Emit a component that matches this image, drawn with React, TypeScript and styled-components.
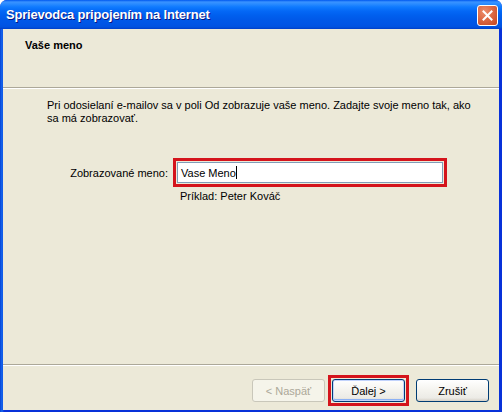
import React from "react";
import styled, { createGlobalStyle } from "styled-components";

const Global = createGlobalStyle`
  html, body { margin: 0; padding: 0; background: #ffffff; }
  body { font-family: Tahoma, "Liberation Sans", Arial, sans-serif; font-size: 11px; color: #000; }
  #root { width: 502px; height: 412px; }
`;

const Window = styled.div`
  width: 502px;
  height: 412px;
  display: flex;
  flex-direction: column;
  background: #0831d9;
  border-radius: 7px 7px 0 0;
  overflow: hidden;
`;

const TitleBar = styled.div`
  height: 29px;
  flex: none;
  display: flex;
  align-items: center;
  justify-content: space-between;
  padding: 0 4px 0 6px;
  background: linear-gradient(
    to bottom,
    #0058ee 0px,
    #3a93ff 2px,
    #2a8bff 4px,
    #0f7afe 7px,
    #0468f6 11px,
    #0060ef 15px,
    #0058e8 20px,
    #0055e6 24px,
    #0052e0 27px,
    #003ec9 29px
  );
`;

const Title = styled.span`
  font-family: "Trebuchet MS", "Liberation Sans", sans-serif;
  font-weight: bold;
  font-size: 13px;
  color: #ffffff;
  text-shadow: 1px 1px 0 #0a1883;
  letter-spacing: -0.2px;
`;

const CloseButton = styled.div`
  width: 21px;
  height: 21px;
  box-sizing: border-box;
  border: 1px solid #ffffff;
  border-radius: 3px;
  background: radial-gradient(circle at 35% 30%, #ec8e6d 0%, #dd6a45 45%, #c4441f 100%);
  display: flex;
  align-items: center;
  justify-content: center;
  margin-top: 1px;
`;

const Frame = styled.div`
  flex: 1;
  display: flex;
  padding: 0 3px 2px 3px;
  background: linear-gradient(to right, #0841d4, #166aee 2px, #0831d9 4px);
  min-height: 0;
`;

const Client = styled.div`
  flex: 1;
  display: flex;
  flex-direction: column;
  background: #ece9d8;
  min-width: 0;
`;

const Header = styled.div`
  height: 58px;
  flex: none;
  padding: 10px 0 0 22px;
  box-sizing: border-box;
`;

const HeaderTitle = styled.div`
  font-weight: bold;
  font-size: 11px;
`;

const Divider = styled.div`
  height: 1px;
  flex: none;
  background: #aca899;
  border-bottom: 1px solid #ffffff;
`;

const Body = styled.div`
  flex: 1;
  padding: 10px 0 0 44px;
`;

const Intro = styled.p`
  margin: 0;
  line-height: 13px;
  white-space: nowrap;
`;

const FieldRow = styled.div`
  display: flex;
  align-items: center;
  margin-top: 33px;
  margin-left: -44px;
`;

const FieldLabel = styled.label`
  width: 165px;
  text-align: right;
  box-sizing: border-box;
`;

const Highlight = styled.div`
  margin-left: 5px;
  border: 3px solid #d4141c;
  padding: 1px;
  width: 266px;
`;

const TextInput = styled.div`
  height: 19px;
  border: 1px solid #7f9db9;
  background: #ffffff;
  display: flex;
  align-items: center;
  padding-left: 3px;
`;

const Caret = styled.span`
  display: inline-block;
  width: 1px;
  height: 13px;
  background: #000;
`;

const Example = styled.div`
  margin: 3px 0 0 133px;
`;

const Footer = styled.div`
  height: 44px;
  flex: none;
  box-sizing: border-box;
  display: flex;
  align-items: center;
  justify-content: flex-end;
  padding: 5px 10px 0 0;
`;

const Button = styled.div<{ $disabled?: boolean }>`
  width: 73px;
  height: 23px;
  box-sizing: border-box;
  border: 1px solid ${(p) => (p.$disabled ? "#c9c7ba" : "#003c74")};
  border-radius: 3px;
  background: ${(p) =>
    p.$disabled
      ? "#f5f4ea"
      : "linear-gradient(to bottom, #ffffff 0%, #f4f3ee 50%, #ecebe6 85%, #d6d0c5 100%)"};
  color: ${(p) => (p.$disabled ? "#aca899" : "#000")};
  display: flex;
  align-items: center;
  justify-content: center;
`;

const DefaultButton = styled(Button)`
  box-shadow: inset 0 0 0 1px #c2d3fc, inset 0 -1px 0 1px #8cb1f5;
`;

const ButtonFocus = styled.div`
  border: 3px solid #d4141c;
  padding: 1px;
  margin: 0 7px 0 3px;
`;

export default function App() {
  return (
    <>
      <Global />
      <Window>
        <TitleBar>
          <Title>Sprievodca pripojením na Internet</Title>
          <CloseButton>
            <svg width="11" height="11" viewBox="0 0 11 11">
              <path d="M1.5 1.5 L9.5 9.5 M9.5 1.5 L1.5 9.5" stroke="#ffffff" strokeWidth="2" strokeLinecap="square" />
            </svg>
          </CloseButton>
        </TitleBar>
        <Frame>
          <Client>
            <Header>
              <HeaderTitle>Vaše meno</HeaderTitle>
            </Header>
            <Divider />
            <Body>
              <Intro>
                Pri odosielaní e-mailov sa v poli Od zobrazuje vaše meno. Zadajte svoje meno tak, ako
                <br />
                sa má zobrazovať.
              </Intro>
              <FieldRow>
                <FieldLabel>Zobrazované meno:</FieldLabel>
                <Highlight>
                  <TextInput>
                    Vase Meno<Caret />
                  </TextInput>
                </Highlight>
              </FieldRow>
              <Example>Príklad: Peter Kováč</Example>
            </Body>
            <Divider />
            <Footer>
              <Button $disabled>&lt; Naspäť</Button>
              <ButtonFocus>
                <DefaultButton>Ďalej &gt;</DefaultButton>
              </ButtonFocus>
              <Button>Zrušiť</Button>
            </Footer>
          </Client>
        </Frame>
      </Window>
    </>
  );
}
